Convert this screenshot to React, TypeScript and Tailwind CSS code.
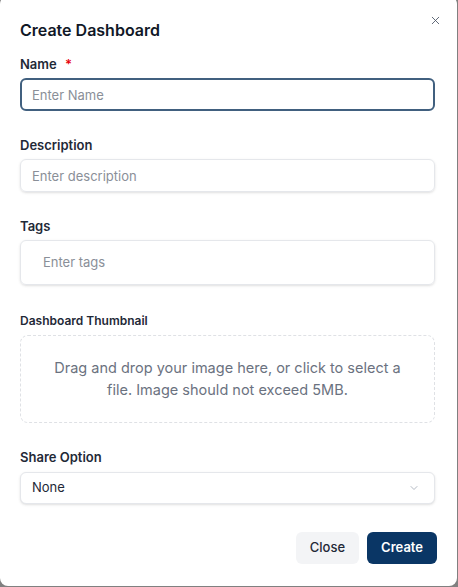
import React, { useState } from 'react';
import { X, ChevronDown } from 'lucide-react';

export default function App() {
  const [name, setName] = useState('');
  const [description, setDescription] = useState('');
  const [tags, setTags] = useState('');
  const [share, setShare] = useState('None');

  return (
    <div className="w-[458px] h-[587px] bg-[#808080] overflow-hidden" style={{ fontFamily: 'Inter, "Noto Sans", sans-serif' }}>
      <div className="relative w-[457px] h-[590px] -mt-[4px] bg-white rounded-lg px-5 pt-[22px]">
        <button className="absolute right-[15px] top-[18px] text-gray-600">
          <X className="w-[13px] h-[13px]" strokeWidth={1.6} />
        </button>
        <h2 className="text-[16px] leading-[24px] font-semibold text-[#111827]">Create Dashboard</h2>

        <div className="mt-[13px] flex flex-col">
          <label className="text-[13px] leading-[18px] font-semibold text-[#1f2937]">
            Name <span className="text-red-600 ml-[5px]">*</span>
          </label>
          <input
            value={name}
            onChange={(e) => setName(e.target.value)}
            placeholder="Enter Name"
            autoFocus
            className="mt-[5px] h-[33px] w-[415px] px-[10px] text-[13px] rounded-md border-2 border-[#41607f] outline-none placeholder:text-[#8a8f98] text-gray-800"
          />
        </div>

        <div className="mt-[25px] flex flex-col">
          <label className="text-[13px] leading-[18px] font-semibold text-[#1f2937]">Description</label>
          <input
            value={description}
            onChange={(e) => setDescription(e.target.value)}
            placeholder="Enter description"
            className="mt-[5px] h-[33px] w-[415px] px-[11px] text-[13px] rounded-md border border-[#e5e7eb] shadow-sm outline-none placeholder:text-[#8a8f98] text-gray-800"
          />
        </div>

        <div className="mt-[25px] flex flex-col">
          <label className="text-[13px] leading-[18px] font-semibold text-[#1f2937]">Tags</label>
          <div className="mt-[5px] h-[45px] w-[415px] rounded-md border border-[#e5e7eb] shadow-sm flex items-center px-[22px]">
            <input
              value={tags}
              onChange={(e) => setTags(e.target.value)}
              placeholder="Enter tags"
              className="flex-1 text-[13px] outline-none placeholder:text-[#8a8f98] text-gray-800"
            />
          </div>
        </div>

        <div className="mt-[27px] flex flex-col">
          <label className="text-[12px] leading-[18px] font-semibold text-[#1f2937]">Dashboard Thumbnail</label>
          <div className="mt-[5px] h-[88px] w-[415px] rounded-lg border border-dashed border-[#dfe1e5] flex items-center justify-center px-7 cursor-pointer">
            <p className="text-[14.5px] leading-[22px] text-[#6b7280] text-center">
              Drag and drop your image here, or click to select a file. Image should not exceed 5MB.
            </p>
          </div>
        </div>

        <div className="mt-[25px] flex flex-col">
          <label className="text-[13px] leading-[18px] font-semibold text-[#1f2937]">Share Option</label>
          <div className="relative mt-[6px] w-[415px]">
            <select
              value={share}
              onChange={(e) => setShare(e.target.value)}
              className="appearance-none h-[32px] w-full px-[11px] text-[13px] rounded-md border border-[#e5e7eb] shadow-sm outline-none text-[#1f2937] bg-white"
            >
              <option>None</option>
              <option>Public</option>
              <option>Private</option>
            </select>
            <ChevronDown className="absolute right-[15px] top-[10px] w-[12px] h-[12px] text-gray-400 pointer-events-none" strokeWidth={1.5} />
          </div>
        </div>

        <div className="mt-[28px] flex justify-end gap-2">
          <button className="h-[32px] px-[14px] rounded-md bg-[#f3f4f6] text-[13px] font-medium text-[#1f2937]">Close</button>
          <button className="h-[32px] px-[14px] rounded-md bg-[#0a3665] text-[13px] font-semibold text-white">Create</button>
        </div>
      </div>
    </div>
  );
}
